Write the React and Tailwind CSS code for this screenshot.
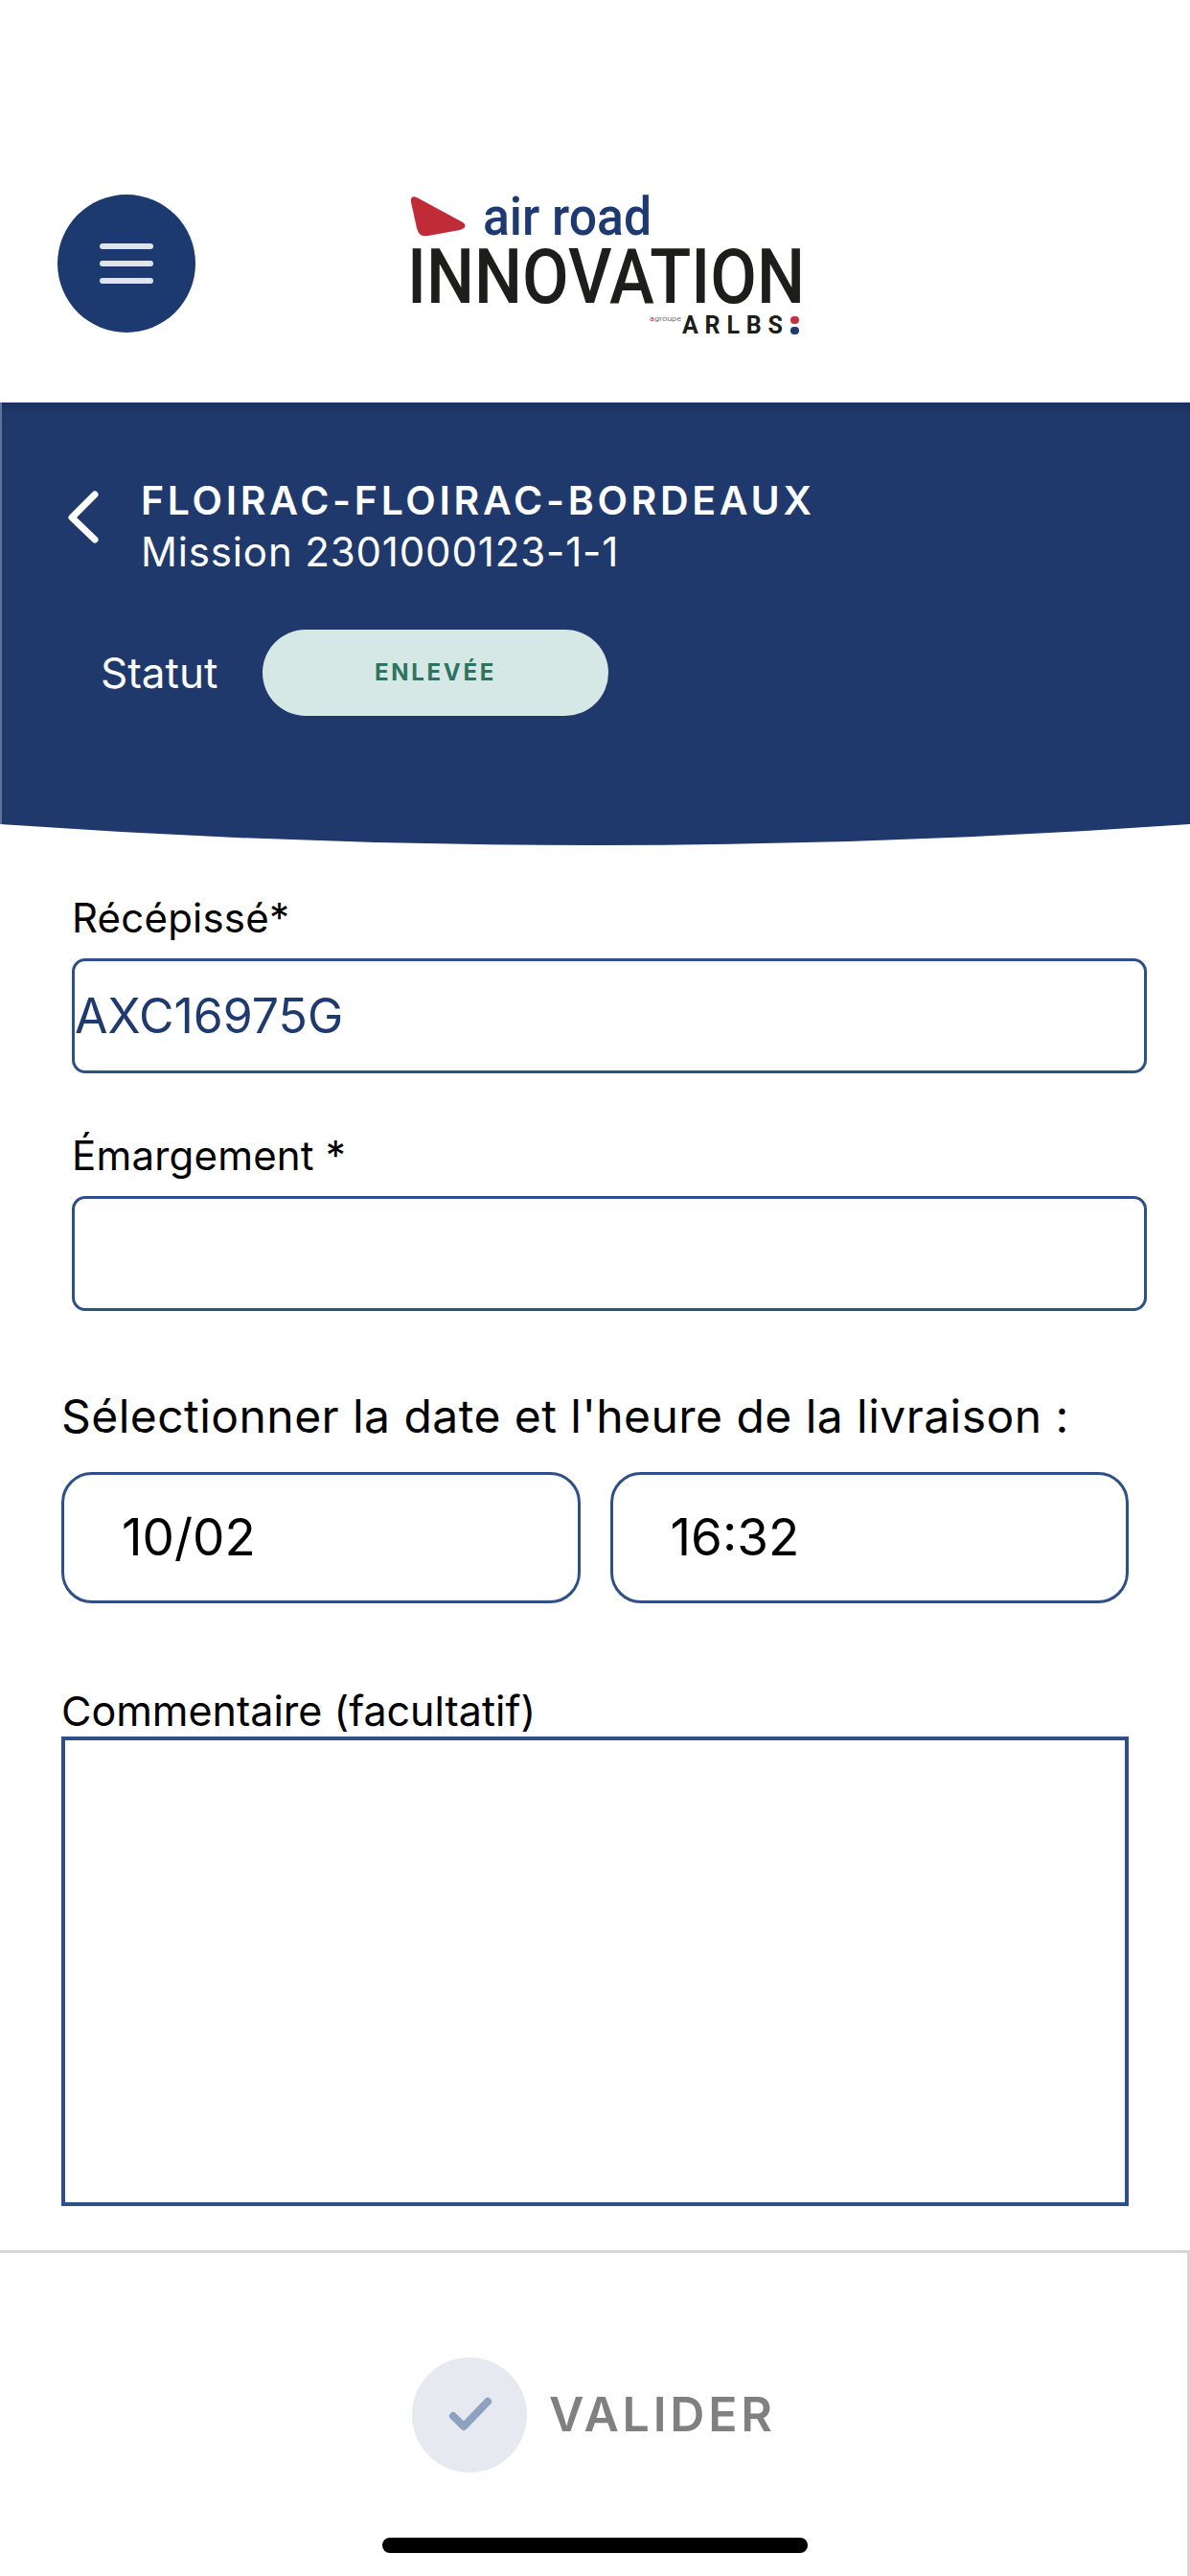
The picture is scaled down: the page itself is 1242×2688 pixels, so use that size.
function Field({ label, value, labelMt }) {
  return (
    <div className={labelMt}>
      <div className="h-[50px] text-[42px] leading-[50px] tracking-[0.2px] text-black">{label}</div>
      <div className="mt-[17px] h-[120px] rounded-[14px] border-[3px] border-[#2f4f87] flex items-center text-[50px] text-[#1f3a6e]">
        {value}
      </div>
    </div>
  );
}

function Logo() {
  return (
    <svg width="420" height="160" viewBox="0 0 420 160" className="block overflow-visible">
      <path d="M7 3 C3 1 0 3 1 8 L7 35 C9 42 12 44 19 43 L52 37 C58 35 59 32 55 29 Z" fill="#bf2c38" />
      <text x="76" y="42" fontFamily="Roboto, sans-serif" fontWeight="500" fontSize="56" fill="#1f3a70" textLength="176" lengthAdjust="spacingAndGlyphs">air road</text>
      <text x="-3" y="113" fontFamily="Roboto, sans-serif" fontWeight="500" fontSize="80" fill="#1d1d1b" textLength="415" lengthAdjust="spacingAndGlyphs">INNOVATION</text>
      <text x="250" y="132" fontFamily="Roboto, sans-serif" fontSize="8" fill="#777" textLength="33" lengthAdjust="spacingAndGlyphs"><tspan fill="#c5303c">a</tspan>groupe</text>
      <text x="284" y="145" fontFamily="Roboto, sans-serif" fontWeight="700" fontSize="25" fill="#1d1d1b" textLength="105" lengthAdjust="spacing">ARLBS</text>
      <rect x="397" y="127" width="9" height="8" rx="4" fill="#c5303c" />
      <rect x="397" y="138" width="9" height="8" rx="4" fill="#1f3a70" />
    </svg>
  );
}

export default function App() {
  return (
    <div className="relative h-[2688px] w-[1242px] bg-white overflow-hidden flex flex-col font-['Inter','Liberation_Sans',sans-serif]">
      <header className="h-[420px] shrink-0 pt-[203px] pl-[60px] flex items-start">
        <div className="w-[144px] h-[144px] rounded-full bg-[#1c3a6f] flex flex-col items-center justify-center gap-[12px]">
          <span className="block w-[56px] h-[6px] rounded-full bg-[#dfe4ec]" />
          <span className="block w-[56px] h-[6px] rounded-full bg-[#dfe4ec]" />
          <span className="block w-[56px] h-[6px] rounded-full bg-[#dfe4ec]" />
        </div>
        <div className="ml-[224px]">
          <Logo />
        </div>
      </header>

      <section className="shrink-0">
        <div className="h-[440px] bg-[#20396c] border-l-[2px] border-[#5f7398] shadow-[inset_0_12px_12px_-8px_rgba(0,0,0,0.18)] pt-[77px] pl-[69px]">
          <div className="flex items-start">
            <svg width="38" height="60" viewBox="0 0 38 60" className="mt-[13px] shrink-0">
              <path d="M28 6 L4 30 L28 53" fill="none" stroke="#fff" strokeWidth="7" strokeLinecap="round" strokeLinejoin="round" />
            </svg>
            <div className="ml-[38px] text-white">
              <div className="text-[41px] leading-[50px] font-semibold tracking-[3.7px] whitespace-nowrap">FLOIRAC-FLOIRAC-BORDEAUX</div>
              <div className="text-[42px] leading-[50px] mt-[4px] tracking-[0.85px]">Mission 2301000123-1-1</div>
            </div>
          </div>
          <div className="flex items-center mt-[56px] pl-[34px]">
            <span className="text-[44px] text-white w-[169px]">Statut</span>
            <span className="w-[361px] h-[90px] rounded-full bg-[#d5e8e5] flex items-center justify-center text-[24px] font-bold tracking-[2.7px] text-[#2c7460]">
              ENLEVÉE
            </span>
          </div>
        </div>
        <svg width="1242" height="22" viewBox="0 0 1242 22" className="block">
          <path d="M0 0 H1242 Q621 44 0 0Z" fill="#20396c" />
        </svg>
      </section>

      <main className="flex-1 min-h-0">
        <div className="pl-[75px] w-[1197px]">
          <Field label="Récépissé*" value="AXC16975G" labelMt="mt-[51px]" />
          <Field label="Émargement *" value="" labelMt="mt-[61px]" />
        </div>
        <div className="pl-[64px] pr-[64px]">
          <div className="mt-[85px] text-[48px] leading-[50px] text-black tracking-[0.45px] whitespace-nowrap">Sélectionner la date et l'heure de la livraison :</div>
          <div className="mt-[33px] grid grid-cols-2 gap-[31px]">
            <div className="h-[137px] rounded-[32px] border-[3px] border-[#2f4f87] flex items-center pl-[60px] text-[53px] text-black">10/02</div>
            <div className="h-[137px] rounded-[32px] border-[3px] border-[#2f4f87] flex items-center pl-[60px] text-[53px] text-black">16:32</div>
          </div>
          <div className="mt-[88px] mb-[3px] text-[43px] leading-[48px] text-black">Commentaire (facultatif)</div>
          <div className="h-[490px] border-[4px] border-[#2f4f87]" />
        </div>
      </main>

      <footer className="shrink-0 h-[340px] border-t-[3px] border-r-[3px] border-[#d6d6d6] pt-[109px] pl-[430px] flex items-start">
        <div className="w-[120px] h-[120px] rounded-full bg-[#e6e9ef] flex items-center justify-center">
          <svg width="60" height="60" viewBox="0 0 60 60">
            <path d="M13 31 L24 42 L49 16" fill="none" stroke="#8da2c0" strokeWidth="8" strokeLinecap="round" strokeLinejoin="round" />
          </svg>
        </div>
        <span className="ml-[23px] h-[120px] leading-[118px] text-[50px] font-semibold tracking-[3.8px] text-[#808080]">VALIDER</span>
      </footer>

      <div className="absolute left-[399px] top-[2648px] w-[444px] h-[16px] rounded-full bg-black" />
    </div>
  );
}
